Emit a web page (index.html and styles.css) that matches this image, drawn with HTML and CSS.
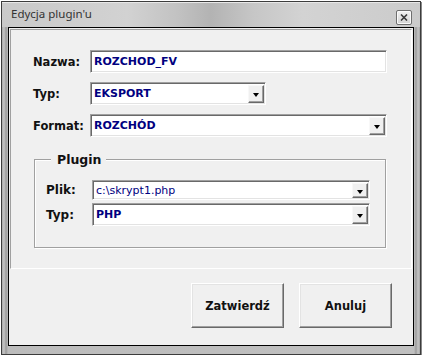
FILE: index.html
```html
<!DOCTYPE html>
<html lang="pl">
<head>
    <meta charset="UTF-8">
    <title>Edycja plugin'u</title>
    <link rel="stylesheet" href="styles.css">
</head>
<body>
    <div class="window">
        <div class="titlebar">
            <span class="title">Edycja plugin'u</span>
            <span class="close-btn">
                <svg width="8" height="7" viewBox="0 0 8 7">
                    <path d="M1 0.5 L7 6.5 M7 0.5 L1 6.5" stroke="#3a3a3a" stroke-width="1.6" fill="none"/>
                </svg>
            </span>
        </div>
        <div class="client">
            <div class="panel">
                <div class="row">
                    <span class="label">Nazwa:</span>
                    <div class="field field-wide">ROZCHOD_FV</div>
                </div>
                <div class="row">
                    <span class="label">Typ:</span>
                    <div class="field combo field-short">EKSPORT<span class="drop"></span></div>
                </div>
                <div class="row">
                    <span class="label">Format:</span>
                    <div class="field combo field-wide">ROZCHÓD<span class="drop"></span></div>
                </div>

                <div class="group">
                    <span class="legend">Plugin</span>
                    <div class="row row-small">
                        <span class="label label-group">Plik:</span>
                        <div class="field combo field-group field-thin">c:\skrypt1.php<span class="drop"></span></div>
                    </div>
                    <div class="row row-group">
                        <span class="label label-group">Typ:</span>
                        <div class="field combo field-group">PHP<span class="drop"></span></div>
                    </div>
                </div>
            </div>
            <div class="buttons">
                <button type="button">Zatwierdź</button>
                <button type="button">Anuluj</button>
            </div>
        </div>
    </div>
</body>
</html>
```

FILE: styles.css
```css
body {
    margin: 0;
    padding: 0;
    background-color: #ffffff;
    font-family: "DejaVu Sans", Tahoma, sans-serif;
}
.window {
    box-sizing: border-box;
    width: 420px;
    height: 354px;
    margin: 1px 0 0 1px;
    border: 1px solid #3c3c3c;
    background: linear-gradient(to right, #a9a9a9, #c4c4c4 2px, #9a9a9a 4px, #bcbcbc 6px, #c0c0c0 calc(100% - 6px), #9c9c9c calc(100% - 4px), #c6c6c6 calc(100% - 2px), #a6a6a6);
    padding: 0 6px 8px 6px;
    display: flex;
    flex-direction: column;
    box-shadow: 1px 1px 0 #888;
}
.titlebar {
    height: 25px;
    margin: 0 -6px;
    padding: 0 8px 0 9px;
    display: flex;
    align-items: center;
    justify-content: space-between;
    background: linear-gradient(to right, #c9c9c9 0%, #d2d2d2 30%, #c2c2c2 42%, #b3b3b3 50%, #c6c6c6 60%, #d3d3d3 72%, #cbcbcb 100%);
    box-shadow: inset 0 1px 0 #e8e8e8;
}
.title {
    font-family: "Noto Sans", "Open Sans", sans-serif;
    font-size: 11.5px;
    color: #333333;
    margin-top: -2px;
}
.close-btn {
    box-sizing: border-box;
    width: 16px;
    height: 15px;
    border: 1px solid #6f6f6f;
    border-radius: 2px;
    background: linear-gradient(#f2f2f2, #d4d4d4);
    display: flex;
    align-items: center;
    justify-content: center;
    margin-top: 6px;
    box-shadow: inset 0 0 0 1px #fafafa;
}
.client {
    flex: 1;
    border: 1px solid #000000;
    background: #f0f0f0;
    display: flex;
    flex-direction: column;
}
.panel {
    box-sizing: border-box;
    height: 240px;
    margin: 1px 1px 0 1px;
    border: 1px solid;
    border-color: #a0a0a0 #ffffff #ffffff #a0a0a0;
    padding: 20px 0 0 22px;
}
.row {
    display: flex;
    align-items: center;
    margin-bottom: 9px;
}
.label {
    width: 57px;
    font-size: 11.5px;
    font-weight: bold;
    color: #111111;
}
.field {
    box-sizing: border-box;
    height: 23px;
    position: relative;
    background: #ffffff;
    border: 1px solid;
    border-color: #a0a0a0 #ffffff #ffffff #a0a0a0;
    box-shadow: inset 1px 1px 0 #696969, inset -1px -1px 0 #e3e3e3;
    padding: 0 0 0 3px;
    display: flex;
    align-items: center;
    font-size: 11px;
    font-weight: bold;
    color: #000080;
}
.field-wide {
    width: 297px;
}
.field-short {
    width: 176px;
}
.drop {
    position: absolute;
    top: 2px;
    right: 1px;
    bottom: 1px;
    width: 16px;
    box-sizing: border-box;
    background: #f0f0f0;
    border: 1px solid;
    border-color: #f8f8f8 #696969 #696969 #f8f8f8;
    box-shadow: inset -1px -1px 0 #a0a0a0;
}
.drop::after {
    content: "";
    position: absolute;
    left: 4px;
    top: 7px;
    border-left: 3.5px solid transparent;
    border-right: 3.5px solid transparent;
    border-top: 4px solid #000000;
}
.group {
    box-sizing: border-box;
    width: 352px;
    margin: 22px 0 0 1px;
    padding: 0 0 21px 11px;
    border: 1px solid #a0a0a0;
    box-shadow: 1px 1px 0 #ffffff, inset 1px 1px 0 #ffffff;
}
.legend {
    display: inline-block;
    margin: -8px 0 0 5px;
    padding: 0 5px 0 6px;
    background: #f0f0f0;
    font-size: 12.5px;
    font-weight: bold;
    color: #111111;
    vertical-align: top;
    line-height: 15px;
}
.row-small {
    margin-top: 1px;
    margin-bottom: 3px;
}
.row-group {
    margin-bottom: 0;
}
.label-group {
    width: 46px;
    font-size: 12px;
}
.field-group {
    width: 278px;
}
.field-thin {
    height: 20px;
    font-weight: normal;
    font-size: 11px;
}
.field-thin .drop::after {
    top: 6px;
}
.buttons {
    display: flex;
    justify-content: flex-end;
    gap: 15px;
    padding: 14px 21px 0 0;
}
.buttons button {
    width: 93px;
    height: 45px;
    background: #f0f0f0;
    border: 1px solid;
    border-color: #ffffff #696969 #696969 #ffffff;
    box-shadow: inset -1px -1px 0 #a0a0a0, inset 1px 1px 0 #e3e3e3;
    font-family: "DejaVu Sans", Tahoma, sans-serif;
    font-size: 11.5px;
    font-weight: bold;
    color: #111111;
    cursor: pointer;
}
```
